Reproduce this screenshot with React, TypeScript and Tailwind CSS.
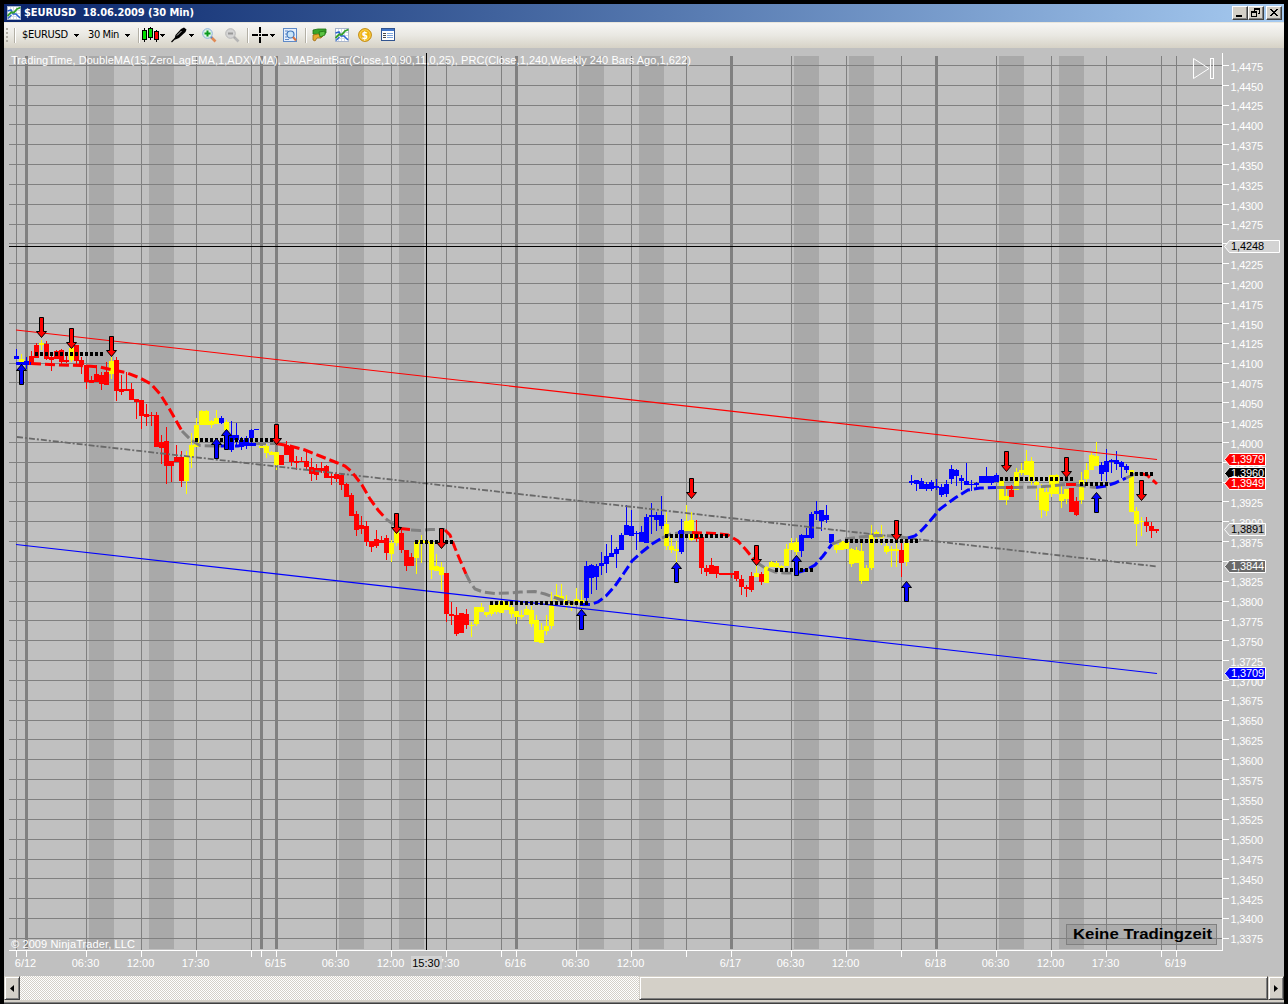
import type { ReactNode } from "react";

type Tone = "r" | "y" | "b" | "g";
// tone, high, body top, body bottom, low
type Bar = [Tone, number, number, number, number];

const TONES: Record<Tone, string> = { r: "#ff0000", y: "#ffff00", b: "#0000ff", g: "#808080" };

const STEP = 5;

const SESSIONS: { x: number; bars: Bar[] }[] = [
  {
    x: 16,
    bars: [
      ["b", 349, 356, 359, 359], ["y", 354, 359, 362, 362], ["b", 357, 361, 365, 369], ["r", 351, 356, 365, 365],
      ["r", 343, 345, 358, 358], ["y", 340, 343, 345, 350], ["r", 341, 344, 359, 360], ["r", 355, 357, 360, 371],
      ["r", 350, 351, 359, 359], ["r", 349, 350, 362, 365], ["r", 353, 360, 362, 363], ["y", 347, 348, 360, 362],
      ["r", 345, 345, 361, 364], ["r", 357, 360, 365, 374], ["r", 365, 365, 382, 389], ["r", 376, 380, 383, 383],
      ["r", 365, 374, 382, 382], ["r", 372, 375, 384, 390],
    ],
  },
  {
    x: 106,
    bars: [
      ["r", 362, 372, 385, 385], ["y", 357, 361, 374, 379], ["r", 357, 360, 391, 401], ["r", 375, 389, 392, 395],
      ["r", 372, 389, 391, 391], ["r", 383, 389, 400, 400], ["r", 399, 399, 402, 419], ["r", 400, 400, 416, 429],
      ["r", 404, 414, 417, 426], ["r", 412, 415, 416, 426], ["r", 412, 415, 447, 447], ["r", 435, 442, 448, 464],
      ["r", 427, 441, 466, 484], ["r", 461, 461, 466, 482], ["r", 445, 457, 462, 462], ["r", 451, 457, 481, 487],
      ["y", 451, 457, 481, 494], ["y", 433, 445, 457, 468],
    ],
  },
  {
    x: 196,
    bars: [
      ["y", 418, 425, 447, 447], ["y", 410, 411, 425, 425], ["y", 410, 411, 425, 425], ["y", 420, 421, 425, 428],
      ["y", 410, 418, 424, 424], ["b", 416, 418, 423, 424], ["y", 420, 422, 430, 430], ["b", 421, 435, 450, 452],
      ["b", 423, 435, 440, 447], ["b", 437, 440, 447, 450], ["b", 436, 438, 446, 449], ["b", 429, 430, 438, 445],
      ["b", 429, 429, 430, 430], ["y", 446, 446, 448, 448], ["y", 444, 446, 453, 458], ["y", 451, 452, 455, 455],
      ["y", 452, 452, 465, 470], ["r", 455, 455, 465, 465], ["r", 441, 445, 455, 455], ["r", 446, 446, 462, 466],
      ["r", 456, 461, 463, 470], ["r", 457, 461, 462, 462],
    ],
  },
  {
    x: 306,
    bars: [
      ["r", 452, 461, 467, 470], ["r", 458, 467, 474, 481], ["r", 464, 468, 475, 480], ["r", 462, 468, 471, 473],
      ["r", 465, 466, 478, 478], ["r", 472, 476, 478, 485], ["r", 472, 474, 479, 482], ["r", 473, 475, 485, 490],
      ["r", 483, 484, 497, 497], ["r", 493, 495, 516, 516], ["r", 511, 514, 530, 536], ["r", 516, 525, 529, 534],
      ["r", 521, 526, 542, 546], ["r", 541, 541, 547, 552], ["r", 530, 539, 546, 548], ["r", 536, 540, 543, 543],
      ["r", 535, 538, 553, 560], ["y", 540, 543, 554, 562],
    ],
  },
  {
    x: 396,
    bars: [
      ["y", 530, 530, 543, 546], ["r", 529, 533, 550, 553], ["r", 550, 550, 566, 571], ["r", 553, 557, 566, 566],
      ["y", 540, 542, 558, 574], ["y", 535, 540, 543, 563], ["y", 541, 541, 543, 543], ["y", 542, 542, 570, 579],
      ["y", 554, 566, 571, 571], ["y", 562, 567, 575, 590], ["r", 573, 573, 614, 622], ["r", 602, 614, 616, 625],
      ["r", 607, 615, 634, 636], ["r", 613, 613, 633, 633], ["r", 609, 614, 625, 629], ["y", 622, 625, 626, 637],
      ["y", 607, 607, 624, 626], ["y", 603, 607, 612, 612], ["y", 612, 612, 615, 617], ["y", 605, 605, 614, 616],
      ["y", 602, 604, 612, 614], ["y", 601, 601, 613, 613],
    ],
  },
  {
    x: 506,
    bars: [
      ["y", 601, 602, 610, 610], ["y", 605, 607, 614, 618], ["y", 611, 611, 617, 624], ["y", 610, 615, 617, 619],
      ["y", 606, 609, 615, 615], ["y", 606, 610, 624, 627], ["y", 615, 620, 642, 642], ["y", 623, 630, 643, 643],
      ["y", 615, 626, 631, 635], ["y", 592, 605, 626, 629], ["y", 584, 595, 600, 606], ["y", 584, 596, 599, 599],
      ["y", 595, 600, 603, 610], ["y", 602, 602, 605, 611], ["y", 588, 599, 602, 602], ["y", 590, 600, 603, 607],
      ["b", 561, 566, 598, 602], ["b", 564, 565, 578, 594], ["b", 564, 566, 577, 590], ["b", 552, 563, 566, 575],
      ["b", 544, 556, 564, 573], ["b", 535, 553, 557, 557],
    ],
  },
  {
    x: 616,
    bars: [
      ["b", 547, 549, 554, 568], ["b", 533, 535, 550, 550], ["b", 505, 525, 535, 535], ["b", 510, 526, 536, 536],
      ["b", 531, 533, 534, 550], ["b", 526, 532, 542, 542], ["b", 514, 517, 543, 543], ["b", 503, 515, 517, 534],
      ["b", 512, 515, 520, 531], ["b", 496, 515, 526, 529], ["y", 512, 524, 546, 550], ["y", 538, 546, 550, 553],
      ["y", 541, 549, 551, 562], ["b", 519, 530, 552, 554], ["y", 505, 521, 531, 531], ["y", 512, 520, 540, 541],
      ["r", 520, 532, 539, 542], ["r", 537, 537, 568, 574],
    ],
  },
  {
    x: 706,
    bars: [
      ["r", 565, 568, 572, 576], ["r", 558, 565, 574, 574], ["r", 566, 566, 574, 578], ["r", 573, 573, 575, 575],
      ["r", 573, 573, 575, 575], ["r", 573, 573, 575, 578], ["r", 571, 571, 579, 581], ["r", 575, 579, 587, 595],
      ["r", 585, 587, 589, 597], ["r", 572, 576, 590, 592], ["y", 565, 573, 577, 577], ["r", 572, 574, 582, 585],
      ["y", 566, 567, 583, 583], ["y", 561, 562, 567, 567], ["y", 561, 563, 567, 570], ["y", 565, 566, 568, 568],
      ["y", 544, 549, 566, 566], ["y", 538, 543, 550, 550], ["y", 538, 542, 552, 555],
    ],
  },
  {
    x: 801,
    bars: [
      ["b", 534, 535, 551, 557], ["b", 528, 535, 538, 538], ["b", 512, 514, 538, 539], ["b", 501, 511, 514, 520],
      ["b", 510, 510, 521, 531], ["b", 505, 515, 520, 523], ["b", 534, 534, 543, 543], ["y", 544, 545, 550, 553],
      ["y", 541, 541, 550, 550], ["y", 541, 542, 549, 549], ["y", 548, 549, 564, 567], ["y", 547, 550, 563, 563],
      ["y", 543, 551, 581, 584], ["y", 565, 568, 581, 581], ["y", 525, 535, 568, 570], ["y", 530, 532, 535, 541],
      ["y", 525, 535, 538, 545], ["y", 542, 546, 552, 554], ["y", 546, 549, 551, 567], ["y", 541, 549, 551, 567],
      ["r", 543, 550, 563, 577], ["y", 543, 543, 562, 566],
    ],
  },
  {
    x: 911,
    bars: [
      ["b", 475, 481, 483, 485], ["b", 480, 480, 484, 491], ["b", 478, 481, 489, 489], ["b", 482, 484, 489, 491],
      ["b", 480, 482, 489, 491], ["b", 479, 486, 488, 490], ["b", 484, 487, 495, 497], ["b", 480, 484, 494, 497],
      ["b", 465, 469, 479, 484], ["b", 469, 470, 476, 486], ["b", 475, 478, 481, 490], ["b", 463, 481, 485, 485],
      ["b", 480, 484, 485, 491], ["b", 482, 483, 485, 487], ["b", 476, 476, 483, 483], ["b", 467, 476, 483, 483],
      ["b", 476, 476, 483, 485], ["b", 473, 475, 482, 482],
    ],
  },
  {
    x: 1001,
    bars: [
      ["y", 480, 481, 500, 500], ["y", 487, 496, 500, 505], ["r", 485, 490, 497, 497], ["y", 468, 472, 490, 490],
      ["y", 463, 470, 473, 475], ["y", 450, 461, 475, 475], ["y", 457, 461, 481, 485], ["y", 480, 482, 485, 500],
      ["y", 484, 488, 510, 518], ["y", 487, 492, 511, 516], ["y", 475, 475, 494, 497], ["y", 474, 475, 494, 494],
      ["y", 485, 494, 501, 508], ["y", 489, 489, 499, 504], ["r", 488, 488, 512, 512], ["r", 497, 501, 515, 516],
      ["y", 472, 480, 500, 504], ["y", 463, 470, 479, 483], ["y", 452, 455, 470, 470], ["y", 442, 456, 466, 466],
      ["b", 462, 465, 474, 481], ["b", 449, 461, 472, 481],
    ],
  },
  {
    x: 1111,
    bars: [
      ["b", 459, 460, 462, 473], ["b", 451, 460, 464, 470], ["b", 461, 462, 467, 478], ["b", 464, 466, 470, 473],
      ["y", 470, 470, 512, 512], ["y", 507, 511, 524, 546], ["y", 517, 521, 522, 536], ["r", 517, 522, 526, 532],
      ["r", 522, 526, 531, 538], ["r", 529, 529, 531, 533],
    ],
  },
];

const MA: [Tone, string][] = [
  ["b", "16,363.5 31,363.5"],
  ["r", "31,363.5 60,365 80,365.5 100,367 111,369.5 126,372.5 140,378 151,384 160,394 170,410 182,431"],
  ["g", "182,431 191,440 200,445.5 213,446 221,446"],
  ["b", "221,446 238,446 245,444.5 256,444.5"],
  ["g", "256,443.5 276,443.5"],
  ["r", "276,443.5 290,446 305,450 320,456 335,462 345,466 352,472 362,485 370,499 378,510 386,519"],
  ["g", "386,519 393,524 400,528"],
  ["r", "400,528.5 411,529.5"],
  ["g", "411,530 420,530.5 430,529.5 445,529.5"],
  ["r", "445,530 450,535 455,548 460,560 466,574"],
  ["g", "466,574 470,582 475,589 483,592 495,593.5 510,593 520,592 535,591.5 545,594 556,598 565,601 580,604.5"],
  ["b", "580,604.5 590,604.5 598,602 606,596 615,586 624,573 632,561 642,552 652,544 662,538"],
  ["g", "662,538 671,534 678,533"],
  ["b", "678,532.5 684,532.5"],
  ["g", "684,532.5 692,532.5"],
  ["r", "692,532.5 715,533.5 728,535 738,541 747,551 756,562"],
  ["g", "756,562 765,568 775,572 785,573 796,573"],
  ["b", "796,573 806,570 815,565 823,556 832,544"],
  ["g", "832,544 845,539 860,537 876,535.5 895,536 908,538"],
  ["b", "908,538 915,536 922,530 930,521 940,509 955,498 968,490 980,488 996,487.5"],
  ["g", "996,487.5 1006,487.5"],
  ["r", "1006,487.5 1013,487.5"],
  ["g", "1013,487.5 1036,487 1050,486 1066,484.5"],
  ["r", "1066,484.5 1076,484.5"],
  ["g", "1076,485 1085,486 1096,487.5"],
  ["b", "1096,487.5 1106,486 1115,483 1126,478"],
  ["g", "1126,478 1135,474 1141,473.5"],
  ["r", "1141,473.5 1147,475 1157,484"],
];

// first x, last x, top
const DOT_RUNS = [
  [36, 101, 352], [196, 271, 438], [416, 451, 540], [491, 586, 601], [666, 726, 534],
  [776, 811, 568], [846, 916, 539], [1001, 1071, 477], [1081, 1106, 482], [1131, 1151, 472],
];

const SELLS = [
  [41, 317], [71, 328], [111, 336], [276, 424], [396, 513], [441, 528],
  [691, 478], [756, 545], [896, 520], [1006, 451], [1066, 457], [1141, 480],
];
const BUYS = [
  [21, 364], [216, 438], [226, 429], [581, 609], [676, 562], [796, 555], [906, 581], [1096, 492],
];

const BREAKS = [89, 149, 339, 399, 579, 639, 794, 849, 999, 1059];
const HOURS = [16, 86, 141, 196, 251, 336, 391, 446, 501, 576, 631, 686, 791, 846, 901, 996, 1051, 1106, 1161, 1176];
const DAYS = [26, 261, 276, 516, 731, 936];

const TIMES: [number, string][] = [
  [26, "6/12"], [86, "06:30"], [141, "12:00"], [196, "17:30"], [276, "6/15"], [336, "06:30"], [391, "12:00"],
  [446, "17:30"], [516, "6/16"], [576, "06:30"], [631, "12:00"], [731, "6/17"], [791, "06:30"], [846, "12:00"],
  [936, "6/18"], [996, "06:30"], [1051, "12:00"], [1106, "17:30"], [1176, "6/19"],
];

const TAGS: { y: number; text: string; fill: string; color: string; wide?: boolean }[] = [
  { y: 246, text: "1,4248", fill: "#d3d3d3", color: "#000", wide: true },
  { y: 473, text: "1,3960", fill: "#000", color: "#fff" },
  { y: 459, text: "1,3979", fill: "#f00", color: "#fff" },
  { y: 483, text: "1,3949", fill: "#f00", color: "#fff" },
  { y: 529, text: "1,3891", fill: "#c0c0c0", color: "#000" },
  { y: 566, text: "1,3844", fill: "#696969", color: "#fff" },
  { y: 673, text: "1,3709", fill: "#00f", color: "#fff" },
];

const LEVELS = Array.from({ length: 45 }, (_, i) => ({
  y: Math.floor(65.4 + i * 19.84),
  label: Math.round(70.8 + i * 19.83),
  text: ((14475 - i * 25) / 10000).toFixed(4).replace(".", ","),
}));

function Candles() {
  return (
    <g shapeRendering="crispEdges">
      {SESSIONS.map((s) =>
        s.bars.map(([tone, high, top, bottom, low], i) => {
          const x = s.x + i * STEP;
          return (
            <g key={x} fill={TONES[tone]}>
              <rect x={x} y={high} width={1} height={low - high} />
              <rect x={x - 2} y={top} width={5} height={bottom - top} />
            </g>
          );
        })
      )}
    </g>
  );
}

function Tag({ y, text, fill, color, wide }: (typeof TAGS)[number]) {
  const right = wide ? 1279.5 : 1265.5;
  return (
    <g>
      <path
        d={`M1224.5 ${y + 0.5} L1229.5 ${y - 5.5} H${right} V${y + 6.5} H1229.5 Z`}
        fill={fill}
        stroke="#fff"
      />
      <text x={1231} y={y + 4} fill={color} textLength={33}>{text}</text>
    </g>
  );
}

function Chart() {
  return (
    <svg
      width={1280}
      height={928}
      viewBox="4 48 1280 928"
      className="block shrink-0 bg-[#c0c0c0] font-['Liberation_Sans',Arial,sans-serif] text-[11px]"
    >
      <g shapeRendering="crispEdges">
        {BREAKS.map((x) => (
          <rect key={x} x={x} y={56} width={25} height={893} fill="#a9a9a9" />
        ))}
        <g fill="#808080">
          {LEVELS.map((l) => <rect key={l.y} x={9} y={l.y} width={1213} height={1} />)}
          {HOURS.map((x) => <rect key={x} x={x} y={56} width={1} height={894} />)}
          {DAYS.map((x) => <rect key={x} x={x - 1} y={56} width={3} height={893} />)}
        </g>
      </g>

      <Candles />

      <line x1={16} y1={330} x2={1157} y2={459.5} stroke="#f00" strokeWidth={1.1} />
      <line x1={16} y1={544.5} x2={1157} y2={673.5} stroke="#00f" strokeWidth={1.1} />
      <line x1={17} y1={437} x2={1157} y2={566.5} stroke="#696969" strokeWidth={1.8} strokeDasharray="6 2 2 2" />

      {MA.map(([tone, points]) => (
        <polyline
          key={points}
          points={points}
          fill="none"
          stroke={TONES[tone]}
          strokeWidth={3}
          strokeDasharray="10 4"
        />
      ))}

      <g shapeRendering="crispEdges">
        {DOT_RUNS.map(([from, to, y]) =>
          Array.from({ length: (to - from) / STEP + 1 }, (_, i) => (
            <rect key={from + i * STEP} x={from + i * STEP - 1} y={y} width={3} height={4} />
          ))
        )}
      </g>

      {SELLS.map(([x, y]) => (
        <path
          key={x}
          transform={`translate(${x} ${y})`}
          d="M-1.5 0.5 H2.5 V14.5 H5.5 L0.5 20.5 L-4.5 14.5 H-1.5 Z"
          fill="#f00"
          stroke="#000"
        />
      ))}
      {BUYS.map(([x, y]) => (
        <path
          key={x}
          transform={`translate(${x} ${y})`}
          d="M-1.5 20.5 H2.5 V6.5 H5.5 L0.5 0.5 L-4.5 6.5 H-1.5 Z"
          fill="#00f"
          stroke="#000"
        />
      ))}

      <g shapeRendering="crispEdges">
        <rect x={9} y={246} width={1213} height={1} />
        <rect x={426} y={53} width={1} height={897} />
        <g fill="#fff">
          <rect x={9} y={950} width={1214} height={1} />
          <rect x={1222} y={53} width={1} height={898} />
          {[...HOURS, ...DAYS].map((x) => <rect key={x} x={x} y={951} width={1} height={6} />)}
          {LEVELS.map((l) => <rect key={l.y} x={1223} y={l.y} width={6} height={1} />)}
        </g>
      </g>

      <g fill="#fff">
        {LEVELS.filter((l) => l.text !== "1,4250").map((l) => (
          <text key={l.y} x={1230.5} y={l.label} textLength={32.5}>{l.text}</text>
        ))}
        {TIMES.map(([x, text]) => (
          <text key={x} x={x - 0.5} y={967} textAnchor="middle">{text}</text>
        ))}
        <text x={11} y={64} textLength={680}>
          TradingTime, DoubleMA(15,ZeroLagEMA,1,ADXVMA), JMAPaintBar(Close,10,90,11,0,25), PRC(Close,1,240,Weekly 240 Bars Ago,1,622)
        </text>
        <text x={11} y={948} textLength={124}>© 2009 NinjaTrader, LLC</text>
      </g>

      <rect x={411} y={956} width={31} height={13} fill="#d3d3d3" />
      <text x={426} y={967} textAnchor="middle">15:30</text>

      {TAGS.map((t) => <Tag key={t.text} {...t} />)}

      <g fill="none" stroke="#fff">
        <path d="M1193.5 58.5 L1209 68.5 L1193.5 78.5 Z" />
        <rect x={1210.5} y={58.5} width={3} height={20} />
      </g>

      <rect x={1066.5} y={924.5} width={150} height={20} fill="#808080" fillOpacity={0.3} stroke="#808080" />
      <text x={1073} y={939} textLength={139} lengthAdjust="spacingAndGlyphs" className="text-[15px] font-bold">
        Keine Tradingzeit
      </text>
    </svg>
  );
}

function ChartIcon() {
  return (
    <svg width={14} height={14} viewBox="0 0 14 14" className="shrink-0">
      <rect x={0.5} y={0.5} width={13} height={13} fill="#fff" stroke="#a9b6cc" />
      <path d="M3.5 1V13M6.5 1V13M9.5 1V13M1 4.5H13M1 7.5H13M1 10.5H13" stroke="#d3dbe8" />
      <path d="M0.5 5L4 4L6 8L9 8L13 12" fill="none" stroke="#2b62d0" strokeWidth={1.5} />
      <path d="M0.5 10L4 6.5L7 6.5L10 3L13.5 1.5" fill="none" stroke="#35a12c" strokeWidth={1.8} />
      <path d="M1 12.5L4.5 9" stroke="#2b62d0" strokeWidth={1.2} />
    </svg>
  );
}

function Caret({ className }: { className?: string }) {
  return (
    <svg width={5} height={3} viewBox="0 0 5 3" className={`shrink-0 ${className ?? ""}`} shapeRendering="crispEdges">
      <path d="M0 0h5v1h-1v1h-1v1h-1v-1h-1v-1h-1z" />
    </svg>
  );
}

function Separator({ className }: { className?: string }) {
  return <div className={`h-[15px] w-[2px] shrink-0 border-l border-r border-l-[#b3b0a6] border-r-white ${className ?? ""}`} />;
}

function Magnifier({ muted }: { muted?: boolean }) {
  return (
    <svg width={15} height={15} viewBox="0 0 15 15" className="shrink-0">
      <path d="M8.5 8.5L13.5 13.5" stroke={muted ? "#b5b5b5" : "#e08a55"} strokeWidth={2.6} />
      <path d="M8 8L10 10" stroke={muted ? "#aaa" : "#5b87c5"} strokeWidth={2} />
      <circle cx={5.5} cy={5.5} r={4.8} fill={muted ? "#d4d4d4" : "#dcf3e4"} stroke={muted ? "#b8b8b8" : "#8bb0dc"} />
      <path d={muted ? "M3 5.5H8" : "M2.5 5.5H8.5M5.5 2.5V8.5"} stroke={muted ? "#999" : "#0a9a1c"} strokeWidth={2} />
    </svg>
  );
}

function Toolbar() {
  return (
    <div className="flex h-[26px] shrink-0 items-center border-t border-[#e9e6dc] bg-linear-to-b from-[#f7f6f4] via-[#e9e8e2] to-[#d6d2c6] pb-px font-['DejaVu_Sans_Condensed','DejaVu_Sans',sans-serif] text-[11px] text-black">
      <svg width={3} height={15} className="ml-[2px] shrink-0" shapeRendering="crispEdges">
        {[0, 4, 8, 12].map((y) => <rect key={y} x={0} y={y} width={2} height={2} fill="#b0ada4" />)}
      </svg>
      <Separator className="ml-[5px]" />
      <span className="ml-[6px] w-[52px] pt-px tracking-[-0.3px]">$EURUSD</span>
      <Caret />
      <span className="ml-[9px] w-[37px] whitespace-nowrap pt-px tracking-[-0.4px]">30 Min</span>
      <Caret />
      <Separator className="ml-[8px]" />
      <svg width={17} height={16} viewBox="0 0 17 16" className="ml-[2px] shrink-0" shapeRendering="crispEdges">
        <path d="M2 1h1v14h-1zM8 0h1v13h-1zM14 3h1v12h-1z" />
        <rect x={0.5} y={3.5} width={4} height={9} fill="#00e000" stroke="#000" />
        <rect x={6.5} y={1.5} width={4} height={9} fill="#00e000" stroke="#000" />
        <rect x={12.5} y={4.5} width={4} height={8} fill="#f00" stroke="#000" />
      </svg>
      <Caret className="ml-[1px]" />
      <svg width={17} height={16} viewBox="0 0 17 16" className="ml-[6px] shrink-0">
        <path d="M3.5 12L4.5 8L10 2L13 0.5L15.5 2.5L14.5 5L8 11L4.5 12.5Z" />
        <path d="M6 8.5L10.5 4" stroke="#ddd" strokeWidth={0.9} />
        <path d="M0.5 15L5 10.5" stroke="#000" strokeWidth={1.3} />
      </svg>
      <Caret className="ml-[1px]" />
      <div className="ml-[8px] flex gap-[8px]">
        <Magnifier />
        <Magnifier muted />
      </div>
      <Separator className="ml-[7px]" />
      <svg width={16} height={16} viewBox="0 0 16 16" className="ml-[3px] shrink-0" shapeRendering="crispEdges">
        <path d="M0 7h6v2h-6zM10 7h6v2h-6zM7 0h2v6h-2zM7 10h2v6h-2z" />
        <rect x={7} y={7} width={2} height={2} />
      </svg>
      <Caret className="ml-[2px]" />
      <svg width={14} height={14} viewBox="0 0 14 14" className="ml-[8px] shrink-0">
        <rect x={0.5} y={0.5} width={13} height={13} fill="#e6effb" stroke="#5f8ac7" />
        <path d="M2 3H5M2 6H4M2 9H4M2 11.5H6" stroke="#5f8ac7" />
        <circle cx={7.5} cy={6.5} r={3.5} fill="#c8e4f8" stroke="#3f76be" strokeWidth={1.2} />
        <path d="M10 9L13 12.5" stroke="#d9713c" strokeWidth={2} />
      </svg>
      <Separator className="ml-[8px]" />
      <svg width={15} height={14} viewBox="0 0 15 14" className="ml-[5px] shrink-0">
        <path d="M1 2L6 1L14 1V5L9 7L1 6Z" fill="#39a52b" stroke="#1c7113" strokeWidth={0.8} />
        <path d="M1 7L6 6L11 8L9 10L5 10L3 13L1 12Z" fill="#e5ab2f" stroke="#a06b10" strokeWidth={0.8} />
        <path d="M7 4L13 3V7L8 9Z" fill="#5cc343" stroke="#1c7113" strokeWidth={0.8} />
      </svg>
      <div className="ml-[8px] flex items-center gap-[9px]">
        <ChartIcon />
        <svg width={14} height={14} viewBox="0 0 14 14">
          <circle cx={7} cy={7} r={6.4} fill="#efb416" stroke="#c08a14" />
          <circle cx={7} cy={7} r={5.2} fill="none" stroke="#fbd55a" strokeWidth={0.8} />
          <text x={7} y={10.6} textAnchor="middle" fill="#fff" className="text-[10px] font-bold">$</text>
        </svg>
        <svg width={14} height={14} viewBox="0 0 14 14" shapeRendering="crispEdges">
          <rect x={0.5} y={0.5} width={13} height={12} fill="#fff" stroke="#31548f" />
          <rect x={1} y={1} width={12} height={2} fill="#3e74c9" />
          <path d="M2 5.5H5M2 7.5H5M2 9.5H5" stroke="#4a4a4a" />
          <path d="M6 5.5H12M6 7.5H12M6 9.5H12" stroke="#7fa6dd" />
        </svg>
      </div>
    </div>
  );
}

function WindowButton({ children, className }: { children: ReactNode; className?: string }) {
  return (
    <button
      className={`h-[14px] w-4 shrink-0 border border-b-[#404040] border-l-white border-r-[#404040] border-t-white bg-[#d4d0c8] shadow-[inset_-1px_-1px_0_#808080] ${className ?? ""}`}
    >
      <svg width={14} height={12} viewBox="0 0 14 12" className="block" shapeRendering="crispEdges">
        {children}
      </svg>
    </button>
  );
}

function TitleBar() {
  return (
    <div className="flex h-[18px] shrink-0 items-center bg-linear-to-r from-[#0a246a] to-[#a6caf0] pl-[3px] pr-[2px]">
      <ChartIcon />
      <h1 className="ml-[3px] flex-1 whitespace-pre pt-px font-['DejaVu_Sans_Condensed','DejaVu_Sans',sans-serif] text-[11px] font-bold tracking-[-0.08px] text-white">
        {"$EURUSD  18.06.2009 (30 Min)"}
      </h1>
      <WindowButton>
        <rect x={3} y={8} width={6} height={2} />
      </WindowButton>
      <WindowButton>
        <path d="M5 1h6v6h-2v-1h1v-3h-4v1h-1zM2 4h6v6h-6zM3 6v3h4v-3z" fillRule="evenodd" />
      </WindowButton>
      <WindowButton className="ml-[2px]">
        <path d="M3 2h2v1h1v1h2v-1h1v-1h2v1h-1v1h-1v1h-1v1h1v1h1v1h1v1h-2v-1h-1v-1h-2v1h-1v1h-2v-1h1v-1h1v-1h1v-1h-1v-1h-1v-1h-1z" />
      </WindowButton>
    </div>
  );
}

const raised =
  "border border-b-[#404040] border-l-[#d4d0c8] border-r-[#404040] border-t-[#d4d0c8] bg-[#d4d0c8] shadow-[inset_1px_1px_0_#fff,inset_-1px_-1px_0_#808080]";

function ScrollBar() {
  return (
    <div className="flex h-6 shrink-0 bg-[repeating-conic-gradient(#fff_0_25%,#d4d0c8_0_50%)] bg-[length:2px_2px]">
      <button className={`flex w-4 items-center justify-center ${raised}`}>
        <svg width={4} height={7} viewBox="0 0 4 7"><path d="M4 0V7L0 3.5Z" /></svg>
      </button>
      <div className="flex-1" />
      <div className={`w-[629px] ${raised}`} />
      <button className={`flex w-4 items-center justify-center ${raised}`}>
        <svg width={4} height={7} viewBox="0 0 4 7"><path d="M0 0V7L4 3.5Z" /></svg>
      </button>
    </div>
  );
}

export default function App() {
  return (
    <div className="flex h-[1004px] w-[1288px] flex-col overflow-hidden bg-black px-1 pt-1">
      <TitleBar />
      <Toolbar />
      <Chart />
      <ScrollBar />
      <div className="h-[2px] shrink-0 bg-[#d4d0c8]" />
      <div className="h-px shrink-0 bg-[#808080]" />
      <div className="h-px shrink-0 bg-[#404040]" />
    </div>
  );
}
